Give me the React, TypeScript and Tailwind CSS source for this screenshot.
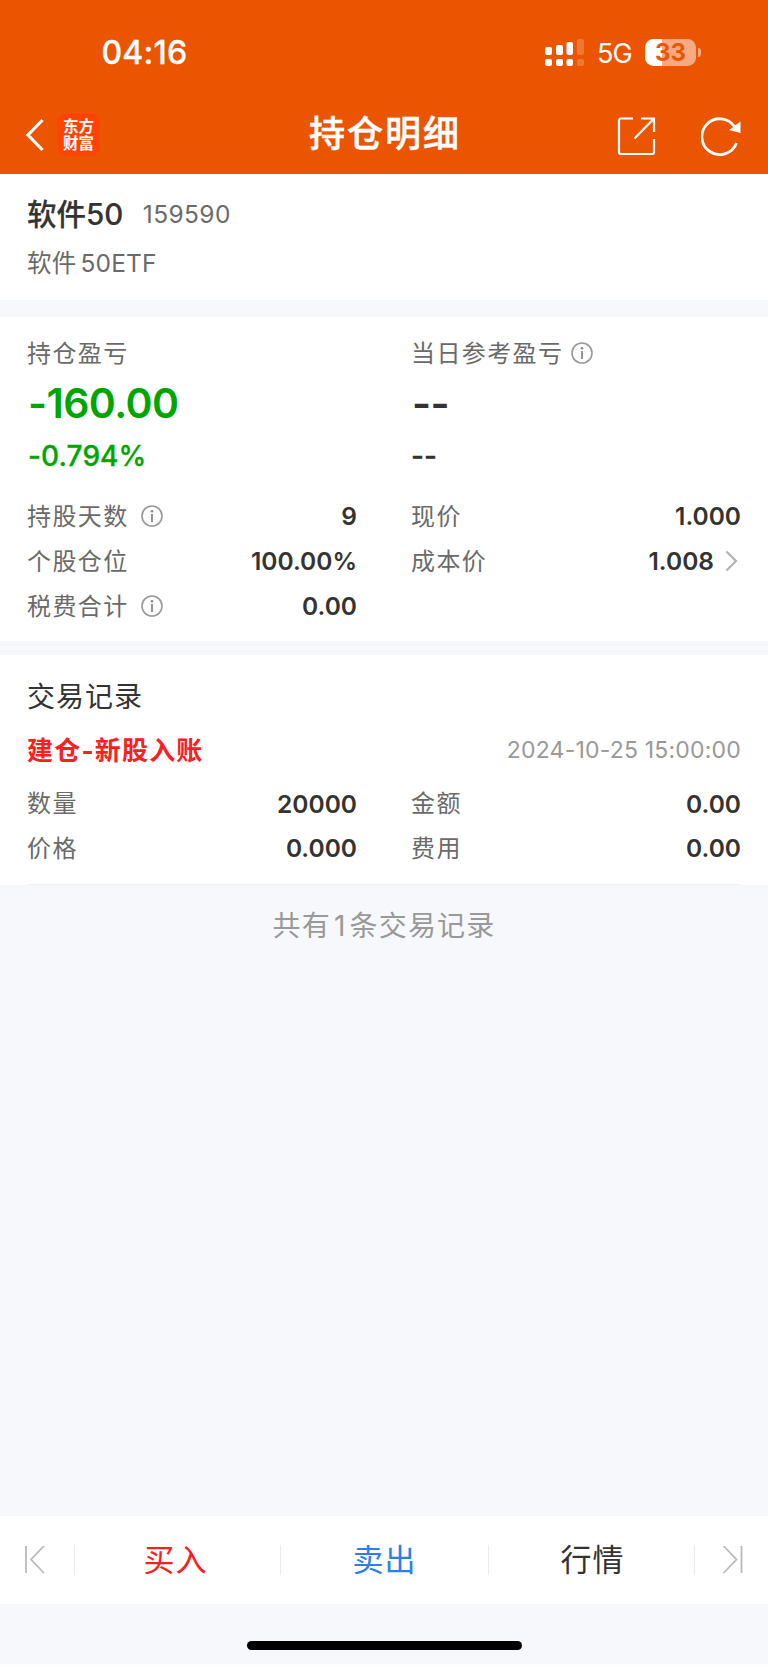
import type { ReactNode } from "react";

function InfoIcon({ className = "" }: { className?: string }) {
  return (
    <svg className={`h-[22px] w-[22px] shrink-0 ${className}`} viewBox="0 0 22 22" fill="none">
      <circle cx="11" cy="11" r="10" stroke="#999" strokeWidth="1.6" />
      <circle cx="11" cy="6.2" r="1.3" fill="#888" />
      <path d="M11 9v8" stroke="#888" strokeWidth="1.8" />
    </svg>
  );
}

function StatusBar() {
  return (
    <div className="flex h-[104px] items-center pl-[101.5px] pr-[67px] text-white">
      <span className="mt-[2px] text-[32px] font-medium leading-none tracking-[0.2px] [-webkit-text-stroke:0.3px]">
        04:16
      </span>
      <svg className="ml-auto h-[28px] w-[40px]" viewBox="0 0 40 28" fill="#fff">
        <rect x="1" y="9" width="7" height="8" rx="2" />
        <rect x="12" y="7" width="7" height="10" rx="2" />
        <rect x="22.5" y="4" width="6.5" height="13" rx="2" />
        <rect x="33" y="1" width="7" height="16" rx="2" opacity="0.2" />
        <rect x="1" y="21" width="7" height="7" rx="2" />
        <rect x="12" y="21" width="7" height="7" rx="2" />
        <rect x="22.5" y="21" width="6.5" height="7" rx="2" />
        <rect x="33" y="21" width="7" height="7" rx="2" opacity="0.2" />
      </svg>
      <span className="ml-[13px] mt-[3px] w-[36px] text-[27px] leading-none tracking-[-1px]">5G</span>
      <div className="ml-[12px] flex h-[27px] w-[51px] items-center justify-center rounded-[8.5px] bg-linear-to-r from-white from-33% to-[#f5aa83] to-33% pt-px text-[24px] font-bold leading-none text-[#eb5502]">
        33
      </div>
      <div className="ml-[1.5px] h-[9px] w-[3.5px] rounded-r-full bg-[#f5aa83]" />
    </div>
  );
}

function TitleBar() {
  return (
    <div className="flex h-[70px] items-start text-white">
      <div className="flex w-[220px] items-center pl-[24px] pt-[9px]">
        <svg className="h-[43px] w-[20px]" viewBox="0 0 20 43" fill="none">
          <path d="M18.5 7 4 22l14.5 15" stroke="#fff" strokeWidth="3.2" />
        </svg>
        <div className="ml-[13px] flex h-[43px] w-[43px] flex-col items-center justify-center rounded-[9px] bg-[#ff4303] text-[15.5px] font-bold leading-[17px]">
          <span>东方</span>
          <span>财富</span>
        </div>
      </div>
      <h1 className="w-[328px] pl-[2px] pt-px text-center text-[36px] font-medium leading-[58px] tracking-[2px] [-webkit-text-stroke:0.5px]">
        持仓明细
      </h1>
      <div className="flex w-[220px] pl-[69px] pt-[12px]">
        <svg className="h-[40px] w-[40px]" viewBox="0 0 40 40" fill="none" stroke="#fff" strokeWidth="2.2">
          <path d="M16 2.5H4a2 2 0 0 0-2 2V36a2 2 0 0 0 2 2h31a2 2 0 0 0 2-2V23M24 2.5h13V16M37 2.5 17.5 22.5" />
        </svg>
        <svg className="ml-[44px] h-[40px] w-[42px]" viewBox="0 0 42 40" fill="none">
          <path d="M35.5 27A17.9 17.9 0 1 1 33.5 10.5" stroke="#fff" strokeWidth="2.8" />
          <path d="M39.5 5.5V17L28 14z" fill="#fff" />
        </svg>
      </div>
    </div>
  );
}

function Row({ label, value, info, arrow }: { label: string; value: string; info?: boolean; arrow?: boolean }) {
  return (
    <div className="flex h-[44.7px] items-center">
      <span className="pt-[2px] text-[24px] tracking-[1.4px] text-[#6a6a6a]">{label}</span>
      {info && <InfoIcon className="ml-[12px]" />}
      <span className="ml-auto pt-px text-[24.5px] font-semibold text-[#333]">{value}</span>
      {arrow && (
        <svg className="ml-[11px] mr-[3px] h-[22px] w-[13px]" viewBox="0 0 13 22" fill="none">
          <path d="m1.5 1.5 9.5 9.5-9.5 9.5" stroke="#b3b3b3" strokeWidth="2.2" />
        </svg>
      )}
    </div>
  );
}

function Columns({ left, right }: { left: ReactNode; right: ReactNode }) {
  return (
    <div className="grid grid-cols-[330px_330px] gap-x-[54px]">
      <div>{left}</div>
      <div>{right}</div>
    </div>
  );
}

function Separator() {
  return <div className="h-[30px] w-px bg-[#ececec]" />;
}

export default function App() {
  return (
    <div className="flex h-[1665px] w-[768px] flex-col bg-[#f6f8fb] font-['Inter','Noto_Sans_CJK_SC',sans-serif] leading-none">
      <header className="h-[174.4px] bg-[#eb5502]">
        <StatusBar />
        <TitleBar />
      </header>

      <section className="h-[125.6px] bg-white px-[27px] pt-[18px]">
        <div className="flex h-[44px] items-center">
          <span className="text-[29.5px] font-medium text-[#333] [-webkit-text-stroke:0.2px]">软件50</span>
          <span className="ml-[19.5px] text-[24.5px] tracking-[0.4px] text-[#6a6a6a]">159590</span>
        </div>
        <div className="mt-[5px] flex h-[44px] items-center gap-[4px] text-[24.5px] tracking-[0.2px] text-[#6a6a6a]">
          <span>软件</span>
          <span>50ETF</span>
        </div>
      </section>

      <section className="mt-[17.3px] h-[323.7px] bg-white px-[27px] pt-[14px]">
        <Columns
          left={
            <>
              <div className="flex h-[44px] items-center pt-[2px] text-[24px] tracking-[1.4px] text-[#6a6a6a]">持仓盈亏</div>
              <div className="flex h-[54px] items-center pl-px pt-[3px] text-[41px] font-semibold tracking-[-0.6px] text-[#00a500]">
                -160.00
              </div>
              <div className="flex h-[52px] items-center pl-px pt-[2px] text-[28px] font-medium tracking-[0.1px] text-[#00a500] [-webkit-text-stroke:0.3px]">
                -0.794%
              </div>
            </>
          }
          right={
            <>
              <div className="flex h-[44px] items-center pt-[2px] text-[24px] tracking-[1.4px] text-[#6a6a6a]">
                当日参考盈亏
                <InfoIcon className="-mt-[2px] ml-[7.5px]" />
              </div>
              <div className="flex h-[54px] items-center pl-px pt-[3px] text-[41px] font-semibold tracking-[-0.6px] text-[#333]">
                --
              </div>
              <div className="flex h-[52px] items-center pt-[2px] text-[28px] font-medium text-[#333] [-webkit-text-stroke:0.3px]">
                --
              </div>
            </>
          }
        />
        <div className="mt-[12.5px]">
          <Columns
            left={
              <>
                <Row label="持股天数" value="9" info />
                <Row label="个股仓位" value="100.00%" />
                <Row label="税费合计" value="0.00" info />
              </>
            }
            right={
              <>
                <Row label="现价" value="1.000" />
                <Row label="成本价" value="1.008" arrow />
              </>
            }
          />
        </div>
      </section>

      <section className="mt-[14px] h-[230px] bg-white px-[27px] pt-[16px]">
        <h2 className="flex h-[50px] items-center pt-[2px] text-[28px] tracking-[1px] text-[#333]">交易记录</h2>
        <div className="mt-[4px] flex h-[50px] items-center justify-between pt-[2px]">
          <span className="text-[26px] font-bold tracking-[1.2px] text-[#fa2022]">建仓-新股入账</span>
          <span className="text-[23px] tracking-[0.2px] text-[#999]">2024-10-25 15:00:00</span>
        </div>
        <div className="mt-[6px] h-[103px]">
          <Columns
            left={
              <>
                <Row label="数量" value="20000" />
                <Row label="价格" value="0.000" />
              </>
            }
            right={
              <>
                <Row label="金额" value="0.00" />
                <Row label="费用" value="0.00" />
              </>
            }
          />
        </div>
        <div className="h-px bg-[#f0f1f3]" />
      </section>

      <p className="pt-[21px] text-center text-[28px] leading-[40px] tracking-[1.2px] text-[#999]">
        共有<span className="mx-[3px]">1</span>条交易记录
      </p>

      <nav className="mt-auto flex h-[88px] items-center bg-white text-[31px] tracking-[1px]">
        <div className="w-[74px] pl-[23px]">
          <svg className="h-[28px] w-[22px]" viewBox="0 0 22 28" fill="none" stroke="#bbb" strokeWidth="1.8">
            <path d="M3 0v27M21 0 8 13.5 21 27" />
          </svg>
        </div>
        <Separator />
        <button className="w-[205px] pb-[2px] pr-[4px] text-[#fa2022]">买入</button>
        <Separator />
        <button className="w-[207px] pb-[2px] text-[#2b7fea]">卖出</button>
        <Separator />
        <button className="w-[205px] pb-[2px] pl-[2px] text-[#333]">行情</button>
        <Separator />
        <svg className="ml-[27px] h-[28px] w-[22px]" viewBox="0 0 22 28" fill="none" stroke="#bbb" strokeWidth="1.8">
          <path d="M19.5 0v27M1.5 0l13 13.5-13 13.5" />
        </svg>
      </nav>
      <div className="flex h-[60px] justify-center pt-[36.5px]">
        <div className="h-[9.5px] w-[275px] rounded-full bg-black" />
      </div>
      <div className="h-px bg-[#fdfdfd]" />
    </div>
  );
}
